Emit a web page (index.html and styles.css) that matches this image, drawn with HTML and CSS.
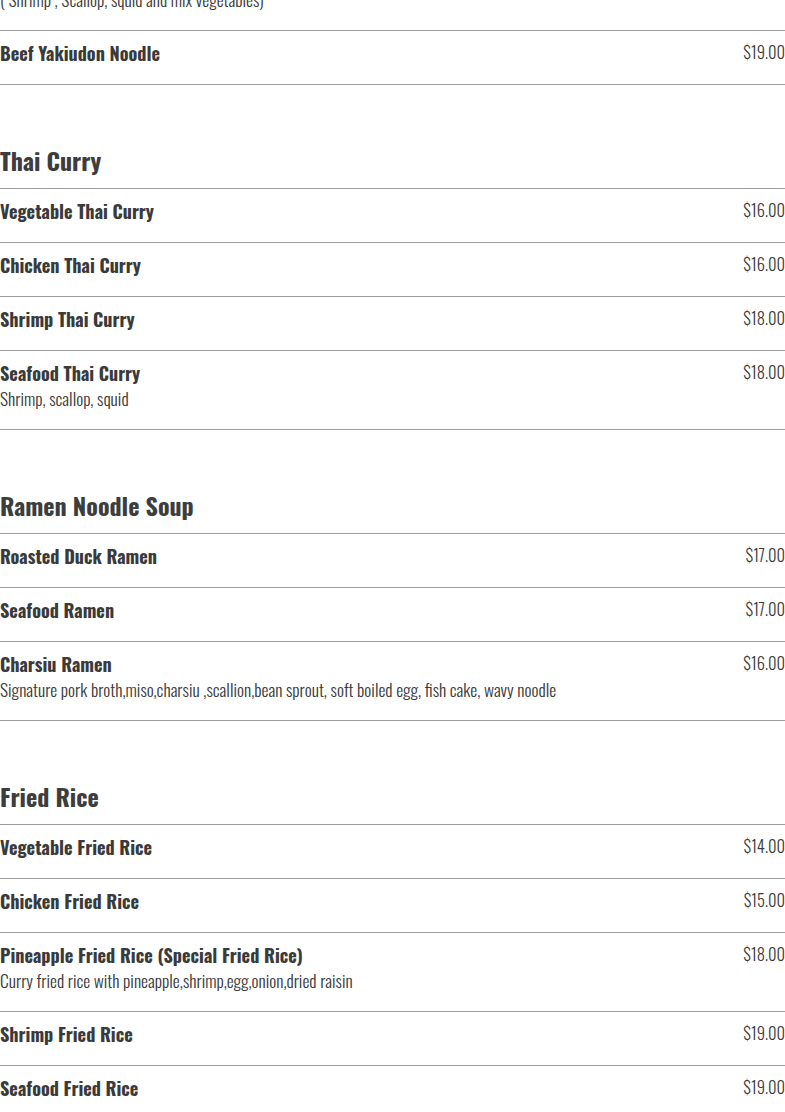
FILE: index.html
```html
<!DOCTYPE html>
<html lang="en">
<head>
<meta charset="utf-8">
<title>Menu</title>
<link rel="stylesheet" href="styles.css">
</head>
<body>
<main class="menu">
  <section class="section section-first">
    <div class="item">
      <div class="item-text">
        <div class="item-name">Seafood Yakiudon Noodle</div>
        <div class="item-desc">( Shrimp , Scallop, squid and mix vegetables)</div>
      </div>
      <div class="item-price">$19.00</div>
    </div>
    <div class="item">
      <div class="item-text"><div class="item-name">Beef Yakiudon Noodle</div></div>
      <div class="item-price">$19.00</div>
    </div>
  </section>

  <section class="section">
    <h2 class="section-title">Thai Curry</h2>
    <div class="item">
      <div class="item-text"><div class="item-name">Vegetable Thai Curry</div></div>
      <div class="item-price">$16.00</div>
    </div>
    <div class="item">
      <div class="item-text"><div class="item-name">Chicken Thai Curry</div></div>
      <div class="item-price">$16.00</div>
    </div>
    <div class="item">
      <div class="item-text"><div class="item-name">Shrimp Thai Curry</div></div>
      <div class="item-price">$18.00</div>
    </div>
    <div class="item">
      <div class="item-text">
        <div class="item-name">Seafood Thai Curry</div>
        <div class="item-desc">Shrimp, scallop, squid</div>
      </div>
      <div class="item-price">$18.00</div>
    </div>
  </section>

  <section class="section">
    <h2 class="section-title">Ramen Noodle Soup</h2>
    <div class="item">
      <div class="item-text"><div class="item-name">Roasted Duck Ramen</div></div>
      <div class="item-price">$17.00</div>
    </div>
    <div class="item">
      <div class="item-text"><div class="item-name">Seafood Ramen</div></div>
      <div class="item-price">$17.00</div>
    </div>
    <div class="item">
      <div class="item-text">
        <div class="item-name">Charsiu Ramen</div>
        <div class="item-desc">Signature pork broth,miso,charsiu ,scallion,bean sprout, soft boiled egg, fish cake, wavy noodle</div>
      </div>
      <div class="item-price">$16.00</div>
    </div>
  </section>

  <section class="section">
    <h2 class="section-title">Fried Rice</h2>
    <div class="item">
      <div class="item-text"><div class="item-name">Vegetable Fried Rice</div></div>
      <div class="item-price">$14.00</div>
    </div>
    <div class="item">
      <div class="item-text"><div class="item-name">Chicken Fried Rice</div></div>
      <div class="item-price">$15.00</div>
    </div>
    <div class="item">
      <div class="item-text">
        <div class="item-name">Pineapple Fried Rice (Special Fried Rice)</div>
        <div class="item-desc">Curry fried rice with pineapple,shrimp,egg,onion,dried raisin</div>
      </div>
      <div class="item-price">$18.00</div>
    </div>
    <div class="item">
      <div class="item-text"><div class="item-name">Shrimp Fried Rice</div></div>
      <div class="item-price">$19.00</div>
    </div>
    <div class="item">
      <div class="item-text"><div class="item-name">Seafood Fried Rice</div></div>
      <div class="item-price">$19.00</div>
    </div>
  </section>
</main>
</body>
</html>
```

FILE: styles.css
```css
html, body {
  margin: 0;
  padding: 0;
  background: #ffffff;
}

body {
  font-family: "Oswald", "Liberation Sans Narrow", "DejaVu Sans Condensed", "DejaVu Sans", sans-serif;
  color: #3a3a3a;
  overflow: hidden;
}

.menu {
  width: 785px;
  margin-top: -49px;
}

.section {
  margin-top: 57px;
}

.section-first {
  margin-top: 0;
}

.section-title {
  margin: 0 0 10px;
  font-size: 24px;
  line-height: 36px;
  font-weight: 700;
  color: #3d3d3d;
}

.item {
  display: flex;
  justify-content: space-between;
  align-items: flex-start;
  border-top: 1px solid #9c9c9c;
  padding: 11px 0 20px;
}

.item:last-child {
  border-bottom: 1px solid #9c9c9c;
}

.section:last-child .item:last-child {
  border-bottom: none;
}

.item-name {
  font-size: 18.2px;
  line-height: 22px;
  font-weight: 700;
  color: #3a3a3a;
}

.item-desc {
  margin-top: 4px;
  font-size: 17.5px;
  line-height: 21px;
  font-weight: 300;
  color: #3a3a3a;
}

.item-price {
  margin-top: -1px;
  font-size: 16.5px;
  line-height: 22px;
  font-weight: 300;
  color: #3a3a3a;
  white-space: nowrap;
}
```
